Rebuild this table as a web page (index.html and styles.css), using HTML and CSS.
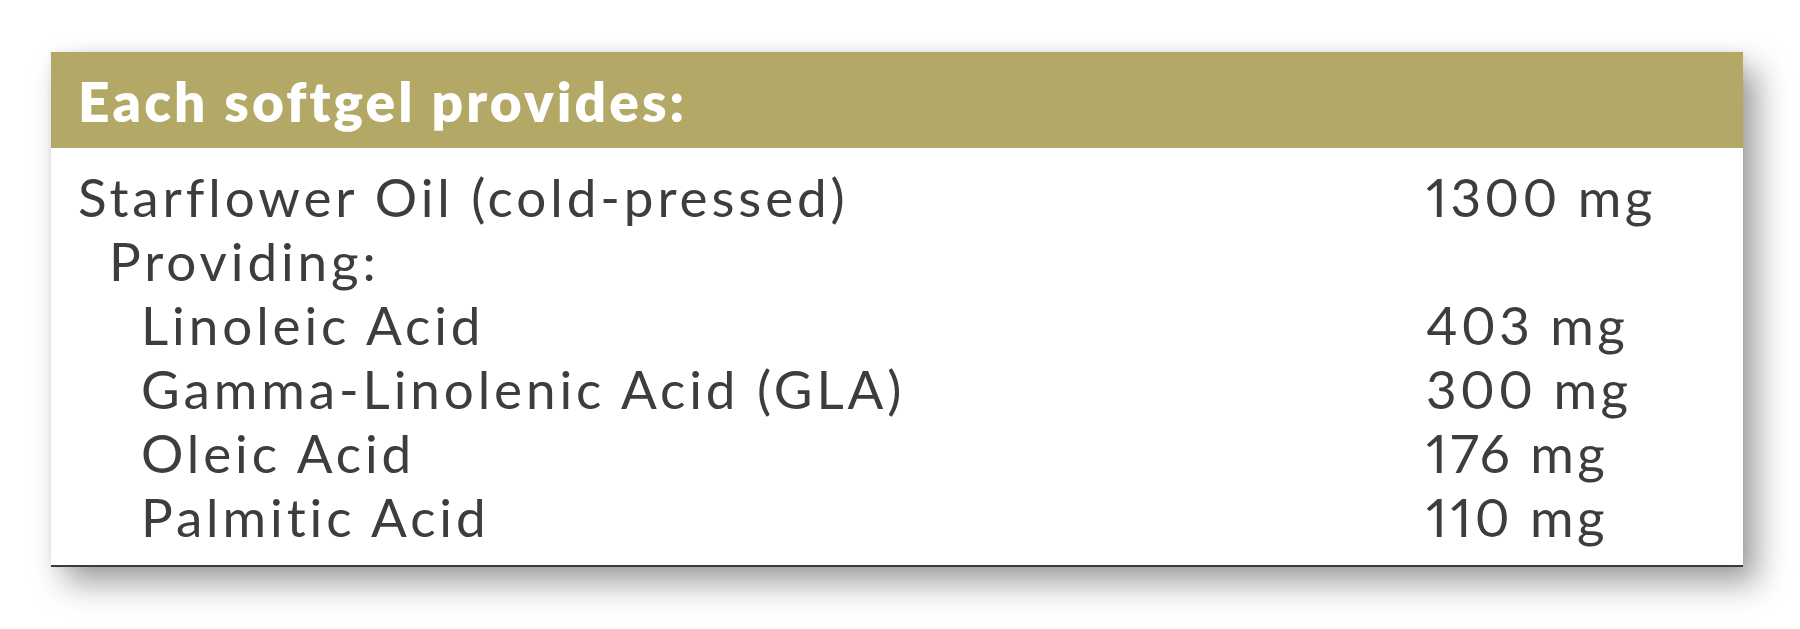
FILE: index.html
```html
<!DOCTYPE html>
<html lang="en">
<head>
<meta charset="utf-8">
<title>Each softgel provides</title>
<link rel="stylesheet" href="styles.css">
</head>
<body>
<section class="card">
  <header class="card-head">Each softgel provides:</header>
  <div class="card-body">
    <div class="row"><span class="name">Starflower Oil (cold-pressed)</span><span class="amt">1300 mg</span></div>
    <div class="row"><span class="name lvl1">Providing:</span><span class="amt"></span></div>
    <div class="row"><span class="name lvl2">Linoleic Acid</span><span class="amt">403 mg</span></div>
    <div class="row"><span class="name lvl2">Gamma-Linolenic Acid (GLA)</span><span class="amt">300 mg</span></div>
    <div class="row"><span class="name lvl2">Oleic Acid</span><span class="amt">176 mg</span></div>
    <div class="row"><span class="name lvl2">Palmitic Acid</span><span class="amt">110 mg</span></div>
  </div>
</section>
</body>
</html>
```
FILE: styles.css
```css
html, body {
  margin: 0;
  padding: 0;
  background: #ffffff;
}
body {
  min-height: 629px;
  box-sizing: border-box;
  padding: 52px 57px 61px 51px;
  font-family: "Lato", "Open Sans", sans-serif;
}
.card {
  background: #ffffff;
  border-bottom: 2px solid #3a3a3a;
  box-shadow: 14px 16px 30px rgba(0, 0, 0, 0.38), 0 0 8px rgba(0, 0, 0, 0.07);
}
.card-head {
  height: 96px;
  background: #b3a866;
  color: #ffffff;
  font-weight: 800;
  font-size: 55px;
  letter-spacing: 3.1px;
  display: flex;
  align-items: center;
  padding: 2px 27px 0 27px;
  box-sizing: border-box;
}
.card-body {
  padding: 17px 27px 16px 27px;
  color: #3d3d3d;
  font-size: 53px;
  line-height: 64px;
}
.row {
  display: grid;
  grid-template-columns: 1348px 1fr;
}
.name {
  letter-spacing: 3.9px;
  white-space: nowrap;
}
.amt {
  letter-spacing: 3.4px;
  white-space: nowrap;
  font-variant-numeric: proportional-nums;
}
.lvl1 { padding-left: 31px; }
.lvl2 { padding-left: 63px; }
```
